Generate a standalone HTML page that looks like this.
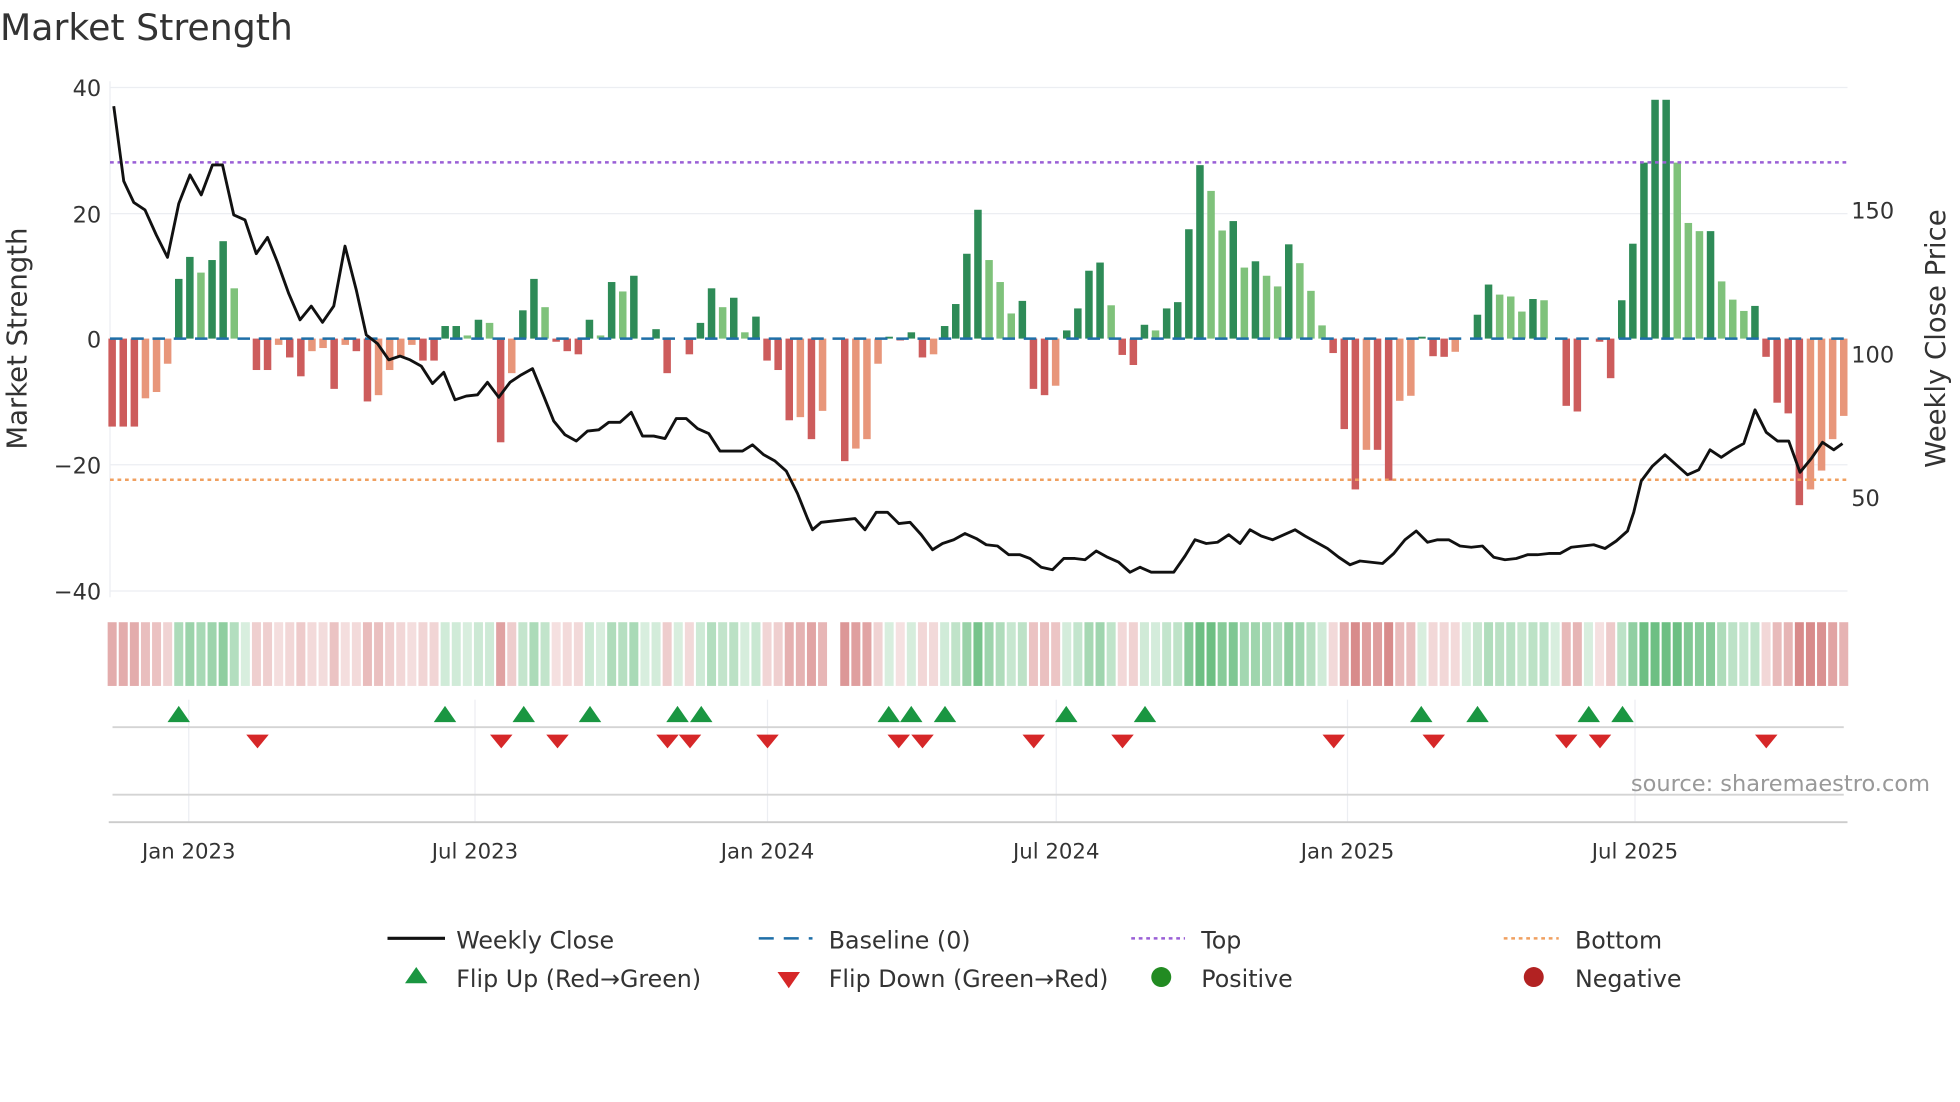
<!DOCTYPE html>
<html><head><meta charset="utf-8"><style>
html,body{margin:0;padding:0;background:#fff;width:1960px;height:1102px;overflow:hidden}
svg{display:block}
text{font-family:"DejaVu Sans","Liberation Sans",sans-serif;fill:#333}
</style></head><body>
<svg id="c" width="1960" height="1102" viewBox="0 0 1568 882" preserveAspectRatio="none" xmlns="http://www.w3.org/2000/svg">
<rect width="1568" height="882" fill="#fff"/>
<text x="0" y="32" font-size="29" fill="#333">Market Strength</text>
<g stroke="#eceef2" stroke-width="1">
<line x1="88" x2="1478" y1="70" y2="70"/><line x1="88" x2="1478" y1="171" y2="171"/>
<line x1="88" x2="1478" y1="372" y2="372"/><line x1="88" x2="1478" y1="473" y2="473"/>
<line x1="88" x2="88" y1="65" y2="478"/>
<line x1="151" x2="151" y1="560" y2="658"/><line x1="380" x2="380" y1="560" y2="658"/>
<line x1="614" x2="614" y1="560" y2="658"/><line x1="845" x2="845" y1="560" y2="658"/>
<line x1="1078" x2="1078" y1="560" y2="658"/><line x1="1308" x2="1308" y1="560" y2="658"/>
</g>
<g font-size="18" text-anchor="end">
<text x="81" y="77">40</text><text x="81" y="178">20</text><text x="81" y="278">0</text>
<text x="81" y="379">−20</text><text x="81" y="480">−40</text>
</g>
<g font-size="18">
<text x="1481" y="175">150</text><text x="1481" y="290">100</text><text x="1481" y="405">50</text>
</g>
<text transform="translate(21,271) rotate(-90)" font-size="22" text-anchor="middle">Market Strength</text>
<text transform="translate(1556,271) rotate(-90)" font-size="22" text-anchor="middle">Weekly Close Price</text>
<g id="bars"></g>
<line x1="88" x2="1478" y1="130" y2="130" stroke="#9a5fd6" stroke-width="2" stroke-dasharray="3,3"/>
<line x1="88" x2="1478" y1="384" y2="384" stroke="#f0a060" stroke-width="2" stroke-dasharray="3,3"/>
<line x1="88" x2="1478" y1="271" y2="271" stroke="#1f6fa8" stroke-width="2" stroke-dasharray="10,7"/>
<polyline id="price" fill="none" stroke="#111" stroke-width="2.3" stroke-linejoin="round"/>
<g id="heat"></g>
<line x1="90" x2="1475" y1="582" y2="582" stroke="#d4d4d4" stroke-width="1.5"/>
<line x1="90" x2="1475" y1="636" y2="636" stroke="#d4d4d4" stroke-width="1.5"/>
<line x1="87" x2="1478" y1="658" y2="658" stroke="#ccc" stroke-width="1.5"/>
<g id="marks"></g>
<text x="1544" y="633" font-size="18" text-anchor="end" style="fill:#999">source: sharemaestro.com</text>
<g font-size="17" text-anchor="middle">
<text x="151" y="687">Jan 2023</text><text x="380" y="687">Jul 2023</text><text x="614" y="687">Jan 2024</text>
<text x="845" y="687">Jul 2024</text><text x="1078" y="687">Jan 2025</text><text x="1308" y="687">Jul 2025</text>
</g>
<g font-size="19">
<line x1="310" x2="356" y1="751" y2="751" stroke="#111" stroke-width="2.5"/><text x="365" y="759">Weekly Close</text>
<line x1="607" x2="650" y1="751" y2="751" stroke="#1f6fa8" stroke-width="2" stroke-dasharray="12,8"/><text x="663" y="759">Baseline (0)</text>
<line x1="905" x2="948" y1="751" y2="751" stroke="#9a5fd6" stroke-width="2" stroke-dasharray="3,3"/><text x="961" y="759">Top</text>
<line x1="1203" x2="1247" y1="751" y2="751" stroke="#f0a060" stroke-width="2" stroke-dasharray="3,3"/><text x="1260" y="759">Bottom</text>
<polygon points="333,774 324,787 342,787" fill="#1a9641"/><text x="365" y="790">Flip Up (Red→Green)</text>
<polygon points="631,791 622,778 640,778" fill="#d62728"/><text x="663" y="790">Flip Down (Green→Red)</text>
<circle cx="929" cy="782" r="8" fill="#228b22"/><text x="961" y="790">Positive</text>
<circle cx="1227" cy="782" r="8" fill="#b22222"/><text x="1260" y="790">Negative</text>
</g>
</svg>
<script>
var v=[-14,-14,-14,-9.5,-8.5,-4,9.5,13,10.5,12.5,15.5,8,0,-5,-5,-1,-3,-6,-2,-1.5,-8,-1,-2,-10,-9,-5,-3,-1,-3.5,-3.5,2,2,0.5,3,2.5,-16.5,-5.5,4.5,9.5,5,-0.5,-2,-2.5,3,0.5,9,7.5,10,0,1.5,-5.5,0,-2.5,2.5,8,5,6.5,1,3.5,
-3.5,-5,-13,-12.5,-16,-11.5,null,-19.5,-17.5,-16,-4,
0.3,-0.3,1,-3,-2.5,2,5.5,13.5,20.5,12.5,9,4,6,
-8,-9,-7.5,1.3,4.8,10.8,12.1,5.3,-2.6,-4.2,2.2,1.3,4.8,5.8,17.4,27.6,23.5,17.2,18.7,11.3,12.3,10,8.3,15,12,7.6,2.1,-2.3,-14.4,-24,-17.7,
-17.7,-22.6,-9.9,-9.1,0.3,-2.8,-2.9,-2.1,0,3.8,8.6,7,6.7,4.3,6.3,6.1,0,-10.7,-11.6,0,-0.5,-6.3,6.1,15.1,28,38,38,28,18.4,17.1,17.1,9.1,6.2,4.4,5.2,-2.9,-10.2,-11.9,-26.5,-24,-21,-16,-12.3];
var N=v.length,st=8.88,ns="http://www.w3.org/2000/svg";
function el(g,t,a){var e=document.createElementNS(ns,t);for(var k in a)e.setAttribute(k,a[k]);document.getElementById(g).appendChild(e);}
for(var i=0;i<N;i++){var x=1475-st*(N-1-i),val=v[i];if(val===null)continue;var p=i>0&&v[i-1]!==null?v[i-1]:0;
var dark=Math.abs(val)>=Math.abs(p)||(p*val<0);var c;
if(val>0)c=dark?"#2e8b57":"#7fc27b";else c=dark?"#cd5c5c":"#e8967a";
if(Math.abs(val)>0.2){var h=Math.abs(val)*5.03;el("bars","rect",{x:x-3,y:val>0?271-h:271,width:6,height:h,fill:c});}
var a=Math.min(1,0.25+Math.abs(val)/30);var hc=val>=0?"rgba(60,170,90,"+(val<0.5?0.2:a*0.75)+")":"rgba(200,90,90,"+(a*0.7)+")";
el("heat","rect",{x:x-3.6,y:498,width:7.2,height:51,fill:hc});}
var P=[[91,85],[99,145],[107,162],[116,168],[125,188],[134,206],[143,163],[152,140],[161,156],[170,132],[178,132],[187,172],[196,176],[205,203],[214,190],[222,210],[231,235],[240,256],[249,245],[258,258],[267,245],[276,197],[285,232],[293,268],[302,275],[311,288],[320,285],[328,288],[337,293],[346,307],[355,298],[364,320],[373,317],[382,316],[390,306],[399,318],[408,306],[417,300],[426,295],[435,317],[443,337],[452,348],[461,353],[470,345],[479,344],[487,338],[496,338],[505,330],[514,349],[523,349],[532,351],[541,335],[549,335],[558,343],[567,347],[576,361],[585,361],[594,361],[602,356],[611,364],[620,369],[629,377],[638,395],[646,415],[650,424],[657,418],[666,417],[675,416],[684,415],[692,424],[701,410],[710,410],[719,419],[728,418],[737,428],[746,440],[754,435],[763,432],[772,427],[781,431],[789,436],[798,437],[807,444],[816,444],[824,447],[833,454],[842,456],[851,447],[860,447],[868,448],[877,441],[886,446],[895,450],[904,458],[912,454],[921,458],[930,458],[939,458],[948,445],[956,432],[965,435],[974,434],[983,428],[992,435],[1000,424],[1009,429],[1018,432],[1027,428],[1036,424],[1044,429],[1053,434],[1062,439],[1071,446],[1080,452],[1088,449],[1097,450],[1106,451],[1115,443],[1124,432],[1133,425],[1142,434],[1150,432],[1159,432],[1168,437],[1177,438],[1186,437],[1195,446],[1204,448],[1213,447],[1222,444],[1230,444],[1239,443],[1248,443],[1257,438],[1266,437],[1275,436],[1284,439],[1293,433],[1302,425],[1307,410],[1313,385],[1322,373],[1332,364],[1341,372],[1350,380],[1359,376],[1368,360],[1377,366],[1386,360],[1395,355],[1404,328],[1413,346],[1422,353],[1431,353],[1440,378],[1449,367],[1458,354],[1467,360],[1474,355]];
document.getElementById("price").setAttribute("points",P.map(function(p){return p.join(",")}).join(" "));
[143,356,419,472,542,561,711,729,756,853,916,1137,1182,1271,1298].forEach(function(x){el("marks","polygon",{points:x+",565 "+(x-9)+",578 "+(x+9)+",578",fill:"#1a9641"});});
[206,401,446,534,552,614,719,738,827,898,1067,1147,1253,1280,1413].forEach(function(x){el("marks","polygon",{points:x+",599 "+(x-9)+",588 "+(x+9)+",588",fill:"#d62728"});});
</script>
</body></html>
